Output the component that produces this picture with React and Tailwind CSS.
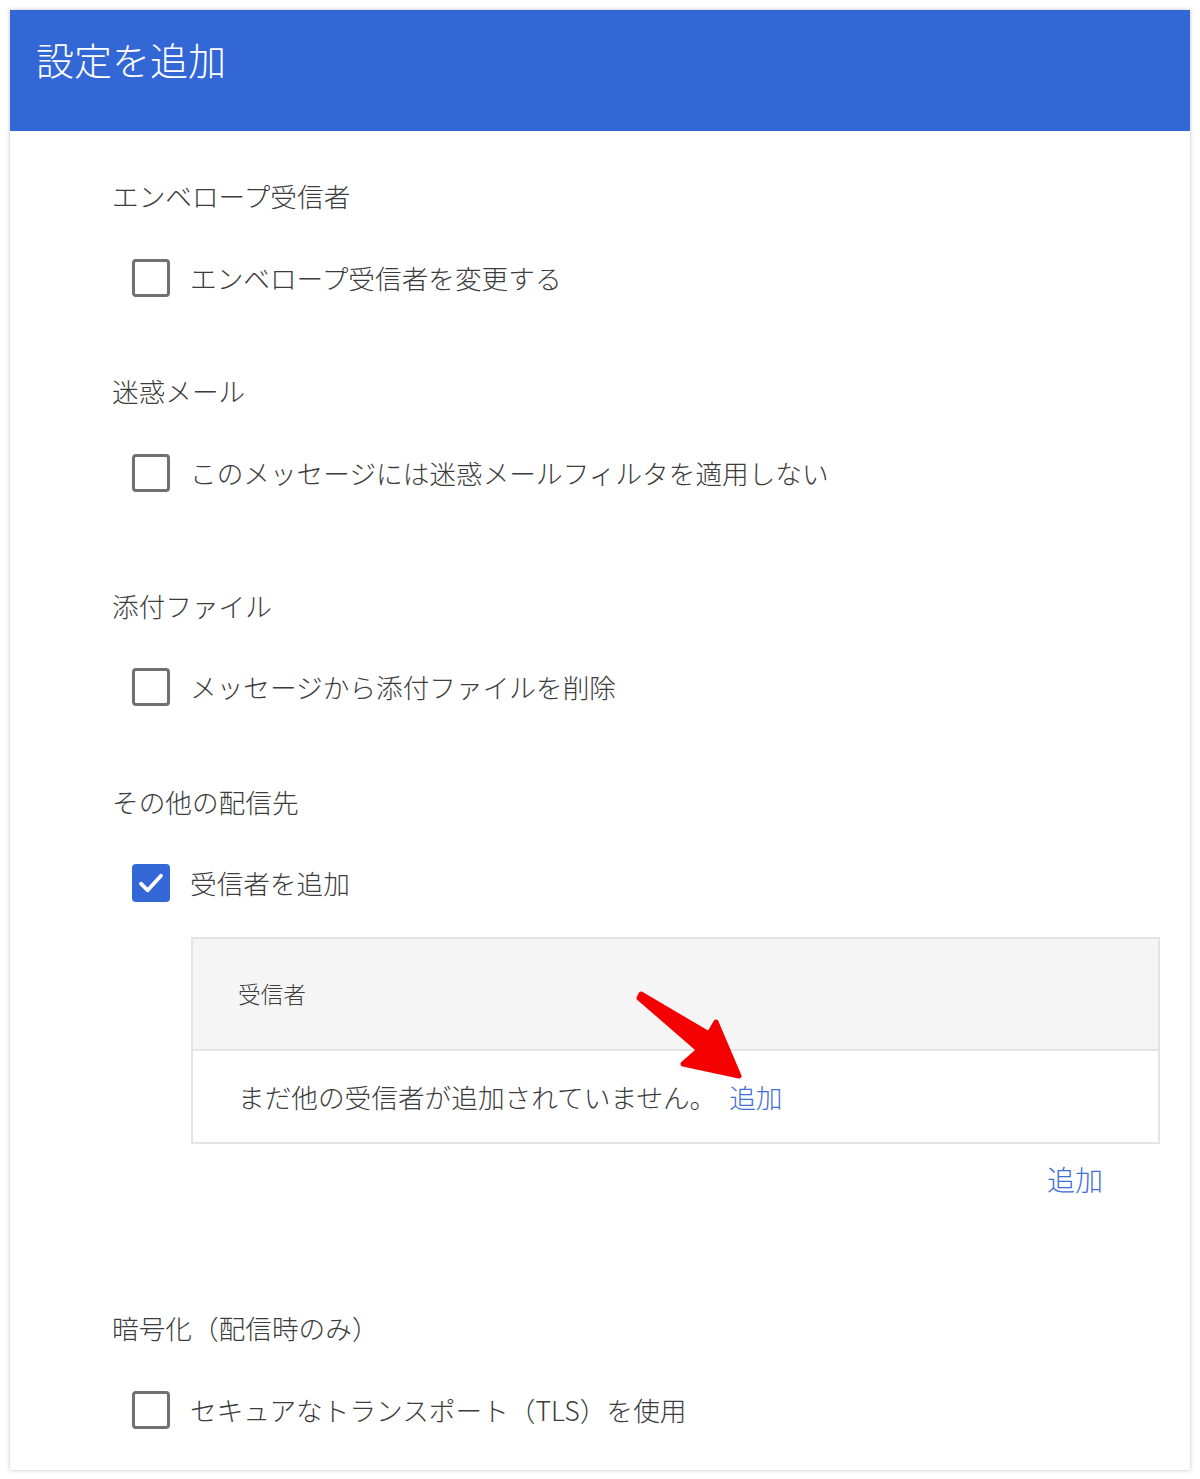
import React from 'react';

const FONT = { fontFamily: '"Noto Sans CJK JP", "Noto Sans", sans-serif' };

const Checkbox = ({ checked }) =>
  checked ? (
    <span className="flex items-center justify-center w-[38px] h-[38px] rounded-[4px] bg-[#3367d6] flex-shrink-0">
      <svg viewBox="0 0 24 24" className="w-[32px] h-[32px]" fill="none" stroke="white" strokeWidth="2.8" strokeLinecap="round" strokeLinejoin="round">
        <path d="M4.5 12.5l5 5L19.5 6.5" />
      </svg>
    </span>
  ) : (
    <span className="block w-[38px] h-[38px] rounded-[4px] border-[3px] border-[#707070] bg-white flex-shrink-0" />
  );

const CheckRow = ({ label, checked, className = '' }) => (
  <label className={`flex items-center gap-[20px] pl-[20px] h-[38px] ${className}`}>
    <Checkbox checked={checked} />
    <span className="text-[26.67px] leading-[38px] font-light text-[#3c3c3c]">{label}</span>
  </label>
);

const SectionTitle = ({ children, className = '' }) => (
  <h3 className={`text-[26.67px] leading-[36px] font-light text-[#3c3c3c] ${className}`}>{children}</h3>
);

export default function App() {
  return (
    <div className="bg-white min-h-[1479px] p-[10px]" style={FONT}>
      <div className="relative w-[1180px] h-[1460px] bg-white shadow-[0_0_4px_rgba(0,0,0,0.25)]">
        <div className="h-[121px] bg-[#3367d6] pl-[26px] pt-[25px]">
          <h1 className="text-[38px] leading-[48px] font-light text-white">設定を追加</h1>
        </div>

        <div className="pl-[102px] pr-[30px]">
          <SectionTitle className="mt-[47px]">エンベロープ受信者</SectionTitle>
          <CheckRow className="mt-[45px]" label="エンベロープ受信者を変更する" />

          <SectionTitle className="mt-[76px]">迷惑メール</SectionTitle>
          <CheckRow className="mt-[45px]" label="このメッセージには迷惑メールフィルタを適用しない" />

          <SectionTitle className="mt-[96px]">添付ファイル</SectionTitle>
          <CheckRow className="mt-[44px]" label="メッセージから添付ファイルを削除" />

          <SectionTitle className="mt-[78px]">その他の配信先</SectionTitle>
          <CheckRow className="mt-[44px]" label="受信者を追加" checked />

          <div className="ml-[79px] mt-[35px] border-2 border-[#e4e4e4]">
            <div className="h-[112px] bg-[#f5f5f5] border-b-2 border-[#e4e4e4] flex items-center pl-[45px]">
              <span className="text-[22.67px] font-light text-[#3c3c3c]">受信者</span>
            </div>
            <div className="h-[91px] flex items-center pl-[45px] text-[26.67px] font-light text-[#3c3c3c]">
              まだ他の受信者が追加されていません。
              <a className="ml-[13px] text-[#3f6fd6]">追加</a>
            </div>
          </div>
          <div className="flex justify-end pr-[57px] mt-[15px]">
            <button className="text-[28px] leading-[40px] font-light text-[#3f6fd6]">追加</button>
          </div>

          <SectionTitle className="mt-[111px]">暗号化（配信時のみ）</SectionTitle>
          <CheckRow className="mt-[45px]" label="セキュアなトランスポート（TLS）を使用" />
        </div>

        {/* red pointer arrow over the add link */}
        <svg className="absolute left-[623px] top-[976px] w-[110px] h-[100px]" viewBox="0 0 110 100">
          <polygon
            points="8,8 76,48 83,36 106,90 50,78 66,64 6,12"
            fill="#f40000"
            stroke="#f40000"
            strokeWidth="5"
            strokeLinejoin="round"
          />
        </svg>
      </div>
    </div>
  );
}
